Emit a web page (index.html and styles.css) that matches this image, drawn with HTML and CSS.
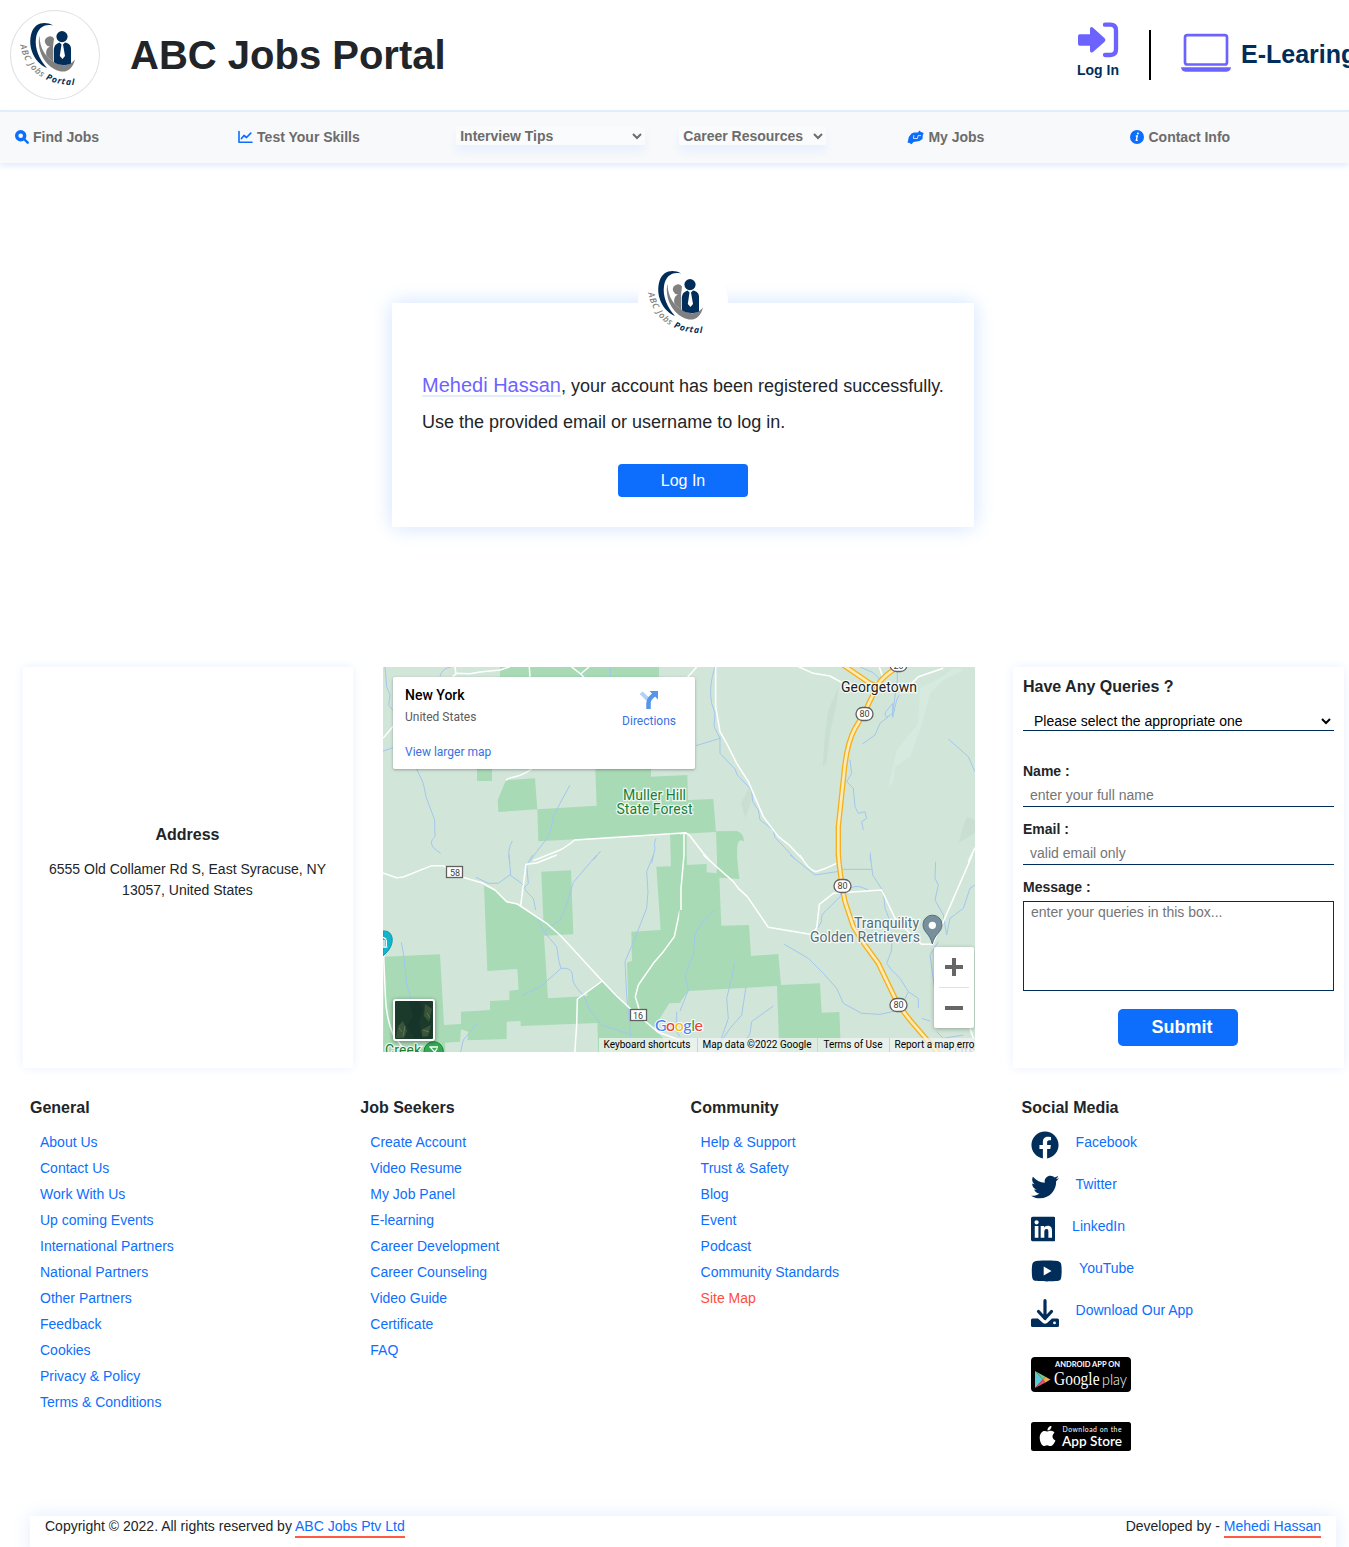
FILE: index.html
```html
<!DOCTYPE html>
<html lang="en">
<head>
<meta charset="utf-8">
<title>ABC Jobs Portal</title>
<link rel="stylesheet" href="styles.css">
</head>
<body>
<svg class="defs" width="0" height="0" aria-hidden="true">
  <symbol id="logo" viewBox="0 0 90 90">
    <path fill="#002d5a" d="M43 15.500C35 11 25 12.500 21.500 23C17 38 25 53 37 58C29 49 24.500 38 26 28C27.500 18 34 13.500 43 15.500Z"/>
    <path fill="#808080" d="M29.500 25.500C26.500 38 33 56 49 61C57 63.500 63 58 65 49.500C60 55.500 54 56.500 47 53.500C36 49 29.500 38 29.500 25.500Z"/>
    <path fill="#808080" d="M44 28.500A5 5 0 1 0 42 36C36 37 35.500 42 36.500 46L43 52V37Z"/>
    <circle cx="52" cy="26.600" r="5.600" fill="#002d5a"/>
    <path fill="#002d5a" d="M49.500 32.500C45 34 43.800 37 43.800 41V52C48 55.500 55 56 61 53.500V39C61 35 58.500 33 55 32.500L53 34.500L55 46L52.500 49L49.800 46L51.500 34.500Z"/>
    <path id="logo-arc" fill="none" d="M10 35Q15.500 60 36 69.500Q49 75.500 66 75"/>
    <text class="logo-text"><textPath href="#logo-arc" textLength="74"><tspan fill="#808080">ABC Jobs </tspan><tspan fill="#002d5a" font-weight="700">Portal</tspan></textPath></text>
  </symbol>
</svg>

<header class="header">
  <svg class="brand-logo"><use href="#logo"/></svg>
  <h1 class="brand-name">ABC Jobs Portal</h1>
  <a class="login">
    <svg width="42" height="36" viewBox="111 66 126 108"><path fill="#6c63ff" d="M119 103H150V88Q150 76 160 84L193 114Q199 120 193 126L160 155Q150 162 150 151V137H119Q114 137 114 131V109Q114 103 119 103Z"/><path d="M195 74H211Q228 74 228 91V148Q228 165 211 165H195" fill="none" stroke="#6c63ff" stroke-width="13" stroke-linecap="round"/></svg>
    <span>Log In</span>
  </a>
  <span class="divider"></span>
  <a class="elearning">
    <svg width="52" height="40" viewBox="420 99 156 120"><rect x="435" y="105.500" width="126" height="88" rx="7" fill="none" stroke="#6c63ff" stroke-width="8"/><path fill="#6c63ff" d="M423 202H573Q571 215 560 215H436Q425 215 423 202Z"/></svg>
    <span>E-Learing</span>
  </a>
</header>

<nav class="nav">
  <a class="nav-link"><svg width="14" height="14" viewBox="0 0 14 14"><circle cx="5.700" cy="5.700" r="4" fill="none" stroke="#0d6efd" stroke-width="3.400"/><path d="M9 9L12.700 12.700" stroke="#0d6efd" stroke-width="2.400" stroke-linecap="round"/></svg>Find Jobs</a>
  <a class="nav-link"><svg width="15" height="14" viewBox="0 0 15 14"><path d="M1 1.500V12.300H14" fill="none" stroke="#0d6efd" stroke-width="1.600" stroke-linecap="round" stroke-linejoin="round"/><path d="M3.500 8.500L6 5.500L8.500 7.500L12.800 3.200" fill="none" stroke="#0d6efd" stroke-width="1.700" stroke-linecap="round" stroke-linejoin="round"/></svg>Test Your Skills</a>
  <select class="nav-select nav-select-wide"><option>Interview Tips</option></select>
  <select class="nav-select"><option>Career Resources</option></select>
  <a class="nav-link"><svg width="17" height="15" viewBox="0 0 17 15"><path fill="#0d6efd" d="M4.500 3.500L7 2.600L11 2.400L12.300 .5L14 2L16.700 3L15.700 5.500L15.500 9L12.500 11L6.500 12L4.500 14.200L2.500 13L.5 12.500L1.200 10L1.800 7Z"/><path d="M6.800 5.200L6.500 8.500H10.500L11 5.600H14" fill="none" stroke="#f8f9fa" stroke-width=".8"/></svg>My Jobs</a>
  <a class="nav-link"><svg width="14" height="14" viewBox="0 0 14 14"><circle cx="7" cy="7" r="7" fill="#0d6efd"/><path d="M5.800 6H7.300L6.300 10.400H7.700" fill="none" stroke="#fff" stroke-width="1.300"/><circle cx="7.900" cy="3.600" r="1" fill="#fff"/></svg>Contact Info</a>
</nav>

<main class="main">
  <section class="notice">
    <svg class="notice-logo"><use href="#logo"/></svg>
    <p class="notice-text"><span class="user">Mehedi Hassan</span>, your account has been registered successfully.</p>
    <p class="notice-text">Use the provided email or username to log in.</p>
    <button class="notice-btn">Log In</button>
  </section>
</main>

<section class="contact">
  <div class="panel address">
    <h3>Address</h3>
    <p>6555 Old Collamer Rd S, East Syracuse, NY 13057, United States</p>
  </div>

  <div class="map">
    <svg width="592" height="385" viewBox="383 667 592 385">
      <rect x="383" y="667" width="592" height="385" fill="#d1e6d9"/>
      <!-- north-west tile -->
      <g transform="translate(380 660) scale(.33333)">
        <g fill="#a8dab5">
          <path d="M360 0H837V80H360ZM291 300H336V363H291ZM378 360L465 355L472 448L355 456L353 420Z"/>
          <path d="M645 300H813V350L922 345L924 420L1000 417L1008 516L475 544L472 448L650 437Z"/>
          <path d="M870 515H920V625H873Z"/>
          <path d="M1008 514L1070 513Q1092 520 1092 545Q1078 535 1074 550Q1070 560 1072 620L1012 622Z"/>
        </g>
        <g class="water">
          <path d="M15 20L20 80L30 105L26 135L38 150M9 273L40 263M110 327L130 370L138 410L164 480L165 530Q145 545 162 565L182 580M180 50Q185 25 215 20M600 50L627 21M691 21V60M570 375L540 430L520 470Q518 500 505 530L470 575L448 605M397 543Q380 570 390 610M662 573L640 600M828 535Q820 550 825 565L815 610"/>
        </g>
        <g class="road"><path d="M218 50L230 40L270 41L300 36L360 30L390 20M225 21L228 42M448 21L450 52M575 21L602 42L627 21M602 42L615 55M9 235L40 198M455 327Q430 345 405 350Q380 355 378 362M460 602L540 570Q560 560 584 540L920 518"/></g>
      </g>
      <!-- north-east tile -->
      <g transform="translate(680 660) scale(.33333)">
        <path fill="#c9dfd1" d="M445 150L475 80L470 130L450 220L440 310L428 320L435 220ZM208 380L222 400L196 475L183 430ZM860 470L885 480V520L835 550L850 500Z"/>
        <path fill="#d7eae0" d="M720 85L780 55L820 25L850 30L790 60L750 100L720 210L690 290L645 320L640 365L625 385L650 270L715 190Z"/>
        <g class="water"><path d="M105 21Q85 80 95 130L105 160L102 200L120 235L48 257M120 230V280L165 327L172 345L215 390L218 425L235 450L240 480L280 510L285 532L348 600M540 21L580 38L610 70M652 30V60L638 160L620 172Q610 165 618 155L638 130V172L650 120L658 105M625 170L600 190L585 225L547 252M510 300L515 340L500 365L520 385L525 440L535 460L555 455L560 475L545 485L550 510M805 237L865 290L885 335M571 578V605"/></g>
        <g class="road"><path d="M107 21V140L120 215L140 250L170 310L205 365L250 470L295 530L325 553L370 600M20 55L50 21M350 18L400 40L450 48L490 70M598 21L608 50M690 75L715 50L790 25M0 521Q20 515 30 528L70 580L90 602M885 563L865 605M12 521V605"/></g>
        <g class="highway"><path d="M475 588V500L492 340Q500 250 525 205L555 155Q580 100 600 65Q620 40 660 18M485 12L570 70L595 80"/></g>
        <g class="highway-fill"><path d="M475 588V500L492 340Q500 250 525 205L555 155Q580 100 600 65Q620 40 660 18M485 12L570 70L595 80"/></g>
      </g>
      <!-- south-west tile -->
      <g transform="translate(380 855) scale(.33333)">
        <path fill="#a8dab5" d="M12 305L180 298L192 510L243 507V470L330 465V438L388 435V407L416 404L412 342L322 348L312 92L350 110L380 142L415 148L490 195L484 50L573 46L580 238L492 242L504 430L622 423V408L667 378L755 465L750 600H655L652 504L422 513V498L380 500V552L262 556L265 530L243 523L240 560L195 563L197 600H9Z"/>
        <path fill="#a8dab5" d="M873 0H902V443L868 445L820 520L850 550V600H750L741 323L756 317L754 230L842 225L829 35L873 34Z"/>
        <g class="water"><path d="M387 0L392 60M288 67L325 85H355L390 60L425 85L440 110L460 130L467 165M458 0L440 30L445 85L432 100M650 0L580 82L555 165L540 195L492 230L530 275L537 320L543 340L510 370L480 395L425 422M475 195L492 230M543 340Q580 335 578 370Q578 390 610 420L630 465L665 510L755 540M820 0L800 50L804 110L800 160L765 250L735 320L740 420L752 545M64 262L72 305L80 390L92 425V445M290 507L250 555L240 600M890 470V530L900 545"/></g>
        <g class="road"><path d="M9 54L50 68L70 66L155 32H190L225 60L305 83L345 105L380 140L412 147L500 205L540 240L667 378L710 423L750 460L835 532L900 555M422 152L438 28L470 24L530 0M667 378L592 432L590 510L584 600M900 165L883 245L850 290L820 325L775 390L766 425L778 465M11 300L16 420Q18 490 40 540L70 580"/></g>
        <path fill="#12b5cb" stroke="#0f98ab" stroke-width="3" d="M9 228C45 225 47 275 9 302Z"/><path d="M9 247L19 253M12 255V273M19 255V273M9 276H22" stroke="#fff" stroke-width="4"/>
        <circle cx="161" cy="589" r="29" fill="#34a853" stroke="#188038" stroke-width="3"/><path d="M148 576H174M152 578L164 591L172 580" fill="none" stroke="#fff" stroke-width="4"/>
      </g>
      <!-- south-east tile -->
      <g transform="translate(680 855) scale(.33333)">
        <path fill="#a8dab5" d="M-2 0H20V30L80 27V52L110 55L112 0H170L178 72L118 68L124 212L207 210L213 303L295 297L303 390L420 385L425 473L478 471L483 591H298L291 393L25 408L-2 444Z"/>
        <g class="water"><path d="M330 0L405 60L470 50L490 43H575M571 0L578 60L610 110L615 160L635 210M103 165L60 210L45 240L40 300L15 360L25 405L0 468M163 322L155 370L140 430L145 490L110 591M198 395L185 480L150 520L120 565M280 453L215 500L210 535L180 591M313 268L385 310L430 355L470 400L490 445L545 475L600 478L660 465L685 410L715 430V460M485 120L440 165Q420 180 425 200L412 220M480 120Q510 90 540 95L565 105M767 20L765 70L775 90L765 135L790 180L800 240L810 190L850 160L870 100L885 90M775 260L750 300L765 410M635 250V285L620 325L635 345L660 370L685 410M725 490L750 498M770 530L790 550L850 540"/></g>
        <g class="road"><path d="M70 0L160 80L175 100L202 125L265 217L390 238L410 220L418 148L460 115L605 105L645 190L695 240L725 268H758L770 240L790 200L877 0M360 0Q385 45 408 50Q440 40 470 25M12 0L3 100V165M870 520L880 550"/></g>
        <g class="highway"><path d="M475 0L478 30L486 93L495 140L520 215L555 270L595 325L655 450L690 495L780 600"/></g>
        <g class="highway-fill"><path d="M475 -3L478 30L486 93L495 140L520 215L555 270L595 325L655 450L690 495L780 600"/></g>
        <path fill="#78909c" stroke="#546e7a" stroke-width="3" d="M757 267C750 235 729 232 729 209A28 28 0 0 1 786 209C786 232 764 235 757 267Z"/><circle cx="757" cy="211" r="11" fill="#fff"/>
      </g>
      <g class="shield">
        <rect x="856" y="707.500" width="17" height="13" rx="6.500"/><text x="864.500" y="717.200">80</text>
        <rect x="834" y="879.500" width="17" height="13" rx="6.500"/><text x="842.500" y="889.200">80</text>
        <rect x="890" y="998.500" width="17" height="13" rx="6.500"/><text x="898.500" y="1008.200">80</text>
        <rect x="890" y="658.500" width="17" height="13" rx="6.500"/><text x="898.500" y="669">20</text>
        <rect x="446.500" y="866.500" width="16" height="11"/><text x="455" y="875.500">58</text>
        <rect x="630.500" y="1009.500" width="16" height="11"/><text x="638" y="1018.700">16</text>
      </g>
      <g class="place">
        <text x="841" y="692" textLength="76" fill="#202124">Georgetown</text>
        <text x="623" y="800" textLength="63" fill="#188038">Muller Hill</text>
        <text x="616.500" y="814" textLength="76" fill="#188038">State Forest</text>
        <text x="854" y="928" textLength="65" fill="#546e7a">Tranquility</text>
        <text x="810" y="942" textLength="110" fill="#546e7a">Golden Retrievers</text>
        <text x="385" y="1055" textLength="36" fill="#188038">Creek</text>
        <text x="954" y="1056" fill="#808080">Otse</text>
      </g>
      <text class="google" x="655" y="1031" textLength="48"><tspan fill="#4285f4">G</tspan><tspan fill="#ea4335">o</tspan><tspan fill="#fbbc04">o</tspan><tspan fill="#4285f4">g</tspan><tspan fill="#34a853">l</tspan><tspan fill="#ea4335">e</tspan></text>
      <rect x="599" y="1038" width="376" height="14" fill="#f5f5f5" fill-opacity=".7"/>
      <path d="M697.500 1038V1052M817.500 1038V1052M889.500 1038V1052" stroke="#c5d8cc"/>
      <g class="legal">
        <text x="603.500" y="1048" textLength="87">Keyboard shortcuts</text>
        <text x="702.500" y="1048" textLength="109">Map data ©2022 Google</text>
        <text x="823.500" y="1048" textLength="59">Terms of Use</text>
        <text x="894.500" y="1048" textLength="80">Report a map erro</text>
      </g>
    </svg>
    <div class="place-card">
      <div class="place-info">
        <strong>New York</strong>
        <span>United States</span>
        <a>View larger map</a>
      </div>
      <div class="directions">
        <svg width="18" height="18" viewBox="0 0 18 18"><path d="M1.300 1.800L8 8.500" stroke="#b3cff5" stroke-width="4"/><path d="M8.500 18V12Q8.500 9 10.500 7L14 3.500" fill="none" stroke="#5696e8" stroke-width="4.500"/><path d="M9.500 0H18V8.500Z" fill="#5696e8"/></svg>
        <a>Directions</a>
      </div>
    </div>
    <div class="satellite"><svg width="38" height="38" viewBox="0 0 38 38"><rect width="38" height="38" fill="#1c3a2c"/><path d="M3 25L8 20L12 30L9 37H1ZM30 3L37 8L34 21L29 15ZM26 29L36 24L33 35L27 36Z" fill="#395438"/><path d="M14 0L18 15L12 25L20 38H28L24 21L28 8L24 0Z" fill="#17342b"/><path d="M4 27L7 31M28 29L34 31M32 12L35 17M10 25L8 35" stroke="#60745b"/></svg></div>
    <div class="zoom"><span class="plus"></span><span class="minus"></span></div>
  </div>

  <form class="panel query">
    <h3>Have Any Queries ?</h3>
    <select><option>Please select the appropriate one</option></select>
    <label>Name :</label>
    <input type="text" placeholder="enter your full name">
    <label>Email :</label>
    <input type="text" placeholder="valid email only">
    <label>Message :</label>
    <textarea placeholder="enter your queries in this box..."></textarea>
    <button type="button">Submit</button>
  </form>
</section>

<footer class="footer">
  <div class="columns">
    <div><h3>General</h3>
      <ul><li>About Us</li><li>Contact Us</li><li>Work With Us</li><li>Up coming Events</li><li>International Partners</li><li>National Partners</li><li>Other Partners</li><li>Feedback</li><li>Cookies</li><li>Privacy &amp; Policy</li><li>Terms &amp; Conditions</li></ul></div>
    <div><h3>Job Seekers</h3>
      <ul><li>Create Account</li><li>Video Resume</li><li>My Job Panel</li><li>E-learning</li><li>Career Development</li><li>Career Counseling</li><li>Video Guide</li><li>Certificate</li><li>FAQ</li></ul></div>
    <div><h3>Community</h3>
      <ul><li>Help &amp; Support</li><li>Trust &amp; Safety</li><li>Blog</li><li>Event</li><li>Podcast</li><li>Community Standards</li><li class="active">Site Map</li></ul></div>
    <div><h3>Social Media</h3>
      <div class="social">
        <a><svg width="28" height="28" viewBox="0 0 512 512"><path d="M504 256C504 119 393 8 256 8S8 119 8 256c0 123.780 90.690 226.380 209.250 245V327.690h-63V256h63v-54.640c0-62.150 37-96.480 93.670-96.480 27.140 0 55.520 4.840 55.520 4.840v61h-31.280c-30.800 0-40.410 19.120-40.410 38.730V256h68.780l-11 71.690h-57.780V501C413.310 482.380 504 379.780 504 256z"/></svg><span>Facebook</span></a>
        <a><svg width="28" height="28" viewBox="0 0 512 512"><path d="M459.370 151.716c.325 4.548.325 9.097.325 13.645 0 138.720-105.583 298.558-298.558 298.558-59.452 0-114.680-17.219-161.137-47.106 8.447.974 16.568 1.299 25.340 1.299 49.055 0 94.213-16.568 130.274-44.832-46.132-.975-84.792-31.188-98.112-72.772 6.498.974 12.995 1.624 19.818 1.624 9.421 0 18.843-1.300 27.614-3.573-48.081-9.747-84.143-51.980-84.143-102.985v-1.299c13.969 7.797 30.214 12.670 47.431 13.319-28.264-18.843-46.781-51.005-46.781-87.391 0-19.492 5.197-37.360 14.294-52.954 51.655 63.675 129.300 105.258 216.365 109.807-1.624-7.797-2.599-15.918-2.599-24.040 0-57.828 46.782-104.934 104.934-104.934 30.213 0 57.502 12.670 76.670 33.137 23.715-4.548 46.456-13.320 66.599-25.340-7.798 24.366-24.366 44.833-46.132 57.827 21.117-2.273 41.584-8.122 60.426-16.243-14.292 20.791-32.161 39.308-52.628 54.253z"/></svg><span>Twitter</span></a>
        <a><svg width="24.500" height="28" viewBox="0 0 448 512"><path d="M416 32H31.900C14.300 32 0 46.500 0 64.300v383.400C0 465.500 14.300 480 31.900 480H416c17.600 0 32-14.500 32-32.300V64.300c0-17.800-14.400-32.300-32-32.300zM135.400 416H69V202.200h66.500V416zm-33.200-243c-21.300 0-38.500-17.300-38.500-38.500S80.900 96 102.200 96c21.200 0 38.500 17.300 38.500 38.500 0 21.300-17.200 38.500-38.500 38.500zm282.100 243h-66.400V312c0-24.800-.5-56.700-34.500-56.700-34.600 0-39.900 27-39.900 54.900V416h-66.400V202.200h63.700v29.200h.9c8.900-16.800 30.600-34.500 62.900-34.500 67.200 0 79.700 44.300 79.700 101.900V416z"/></svg><span>LinkedIn</span></a>
        <a><svg width="31.500" height="28" viewBox="0 0 576 512"><path d="M549.655 124.083c-6.281-23.650-24.787-42.276-48.284-48.597C458.781 64 288 64 288 64S117.220 64 74.629 75.486c-23.497 6.322-42.003 24.947-48.284 48.597-11.412 42.867-11.412 132.305-11.412 132.305s0 89.438 11.412 132.305c6.281 23.650 24.787 41.500 48.284 47.821C117.220 448 288 448 288 448s170.780 0 213.371-11.486c23.497-6.321 42.003-24.171 48.284-47.821 11.412-42.867 11.412-132.305 11.412-132.305s0-89.438-11.412-132.305zm-317.510 213.508V175.185l142.739 81.205-142.739 81.201z"/></svg><span>YouTube</span></a>
        <a><svg width="28" height="28" viewBox="0 0 28 28"><path d="M14 1.700V19M7.500 12.500L14 19.500L20.500 12.500" fill="none" stroke="#002d5a" stroke-width="3.200" stroke-linecap="round" stroke-linejoin="round"/><path fill-rule="evenodd" d="M1.500 19.500H7L12 24Q14 25.500 16 24L21 19.500H26.500Q28 19.500 28 21V26.500Q28 28 26.500 28H1.500Q0 28 0 26.500V21Q0 19.500 1.500 19.500ZM23.500 22.500A1.400 1.400 0 1 0 23.500 25.300A1.400 1.400 0 1 0 23.500 22.500Z"/></svg><span>Download Our App</span></a>
      </div>
      <svg class="badge badge-play" width="100" height="35" viewBox="0 0 100 35"><rect width="100" height="35" rx="4"/><path fill="#5bc8d8" d="M4 14V31L12 22.500Z"/><path fill="#6ecb8c" d="M4 14L14.500 19.700L12 22.500Z"/><path fill="#e2506a" d="M4 31L14.500 25.500L12 22.500Z"/><path fill="#f0a850" d="M14.500 19.700L19.500 22.500L14.500 25.500L12 22.500Z"/><g fill="#fff"><text x="24" y="10" textLength="65" lengthAdjust="spacingAndGlyphs" font-size="6.800" font-weight="700">ANDROID APP ON</text><text class="serif" x="23" y="28" textLength="45.500" lengthAdjust="spacingAndGlyphs" font-size="18">Google</text><text class="light" x="71" y="28" textLength="25" lengthAdjust="spacingAndGlyphs" font-size="15">play</text></g></svg>
      <svg class="badge badge-store" width="100" height="29" viewBox="0 0 100 29"><rect width="100" height="29" rx="2.500"/><path fill="#fff" d="M16.500 9.500C18 9.500 19.500 8 22.500 9.500L23.500 10.800C20.500 13 21 17 24.500 18.500C23 22 21.500 24 19.500 24C18 24 17.500 23.200 16 23.200S14 24 12.800 24C10 24 6.500 14.500 10.500 10.500C13 8 15 9.500 16.500 9.500ZM16.500 8.500C16.300 6 18.500 4 20.500 4C20.600 6.500 18.700 8.500 16.500 8.500Z"/><g fill="#fff"><text x="31.500" y="9.800" textLength="59" font-size="6.800">Download on the</text><text x="31" y="24" textLength="60" lengthAdjust="spacingAndGlyphs" font-size="14" font-weight="600">App Store</text></g></svg>
    </div>
  </div>
  <div class="copyright">
    <p>Copyright © 2022. All rights reserved by <a>ABC Jobs Ptv Ltd</a></p>
    <p>Developed by - <a>Mehedi Hassan</a></p>
  </div>
</footer>
</body>
</html>
```
FILE: styles.css
```css
* { box-sizing: border-box; margin: 0; padding: 0; }
body { font-family: "Liberation Sans", Arial, sans-serif; font-size: 14px; line-height: 21px; color: #212529; background: #fff; height: 1547px; overflow: hidden; }
svg { display: block; flex: none; }
.defs { position: absolute; }
button, input, select, textarea { font-family: inherit; }
h3 { font-size: 16px; line-height: 20px; }

.header { display: flex; align-items: flex-start; height: 110px; padding: 10px 0 0 10px; overflow: hidden; }
.brand-logo { width: 90px; height: 90px; border-radius: 50%; box-shadow: inset 0 0 0 1px #dee2e6; }
.logo-text { font: italic 600 8.700px "Open Sans", "Noto Sans", sans-serif; }
.brand-name { margin: 21px auto 0 30px; font-size: 40px; line-height: 48px; }
.login { display: flex; flex-direction: column; margin-top: 12px; color: #002d5a; font-weight: 700; }
.login span { line-height: 18px; margin-top: 3px; }
.divider { width: 2px; height: 50px; margin: 20px 29px 0 30px; background: #000; }
.elearning { display: flex; width: 169px; flex: none; gap: 9px; margin-top: 23px; color: #002d5a; font-size: 25px; font-weight: 700; white-space: nowrap; }
.elearning span { line-height: 42px; }

.nav { display: grid; grid-template-columns: repeat(6, 223.100px); height: 53px; padding-left: 15px; border-top: 2px solid #e1ecff; background: #f8f9fa; box-shadow: 0 3px 6px #e1ecff; color: #6c6c6c; font-weight: 700; overflow: visible; }
.nav-link { display: flex; align-items: center; gap: 4px; height: 50px; white-space: nowrap; }
.nav-select { width: 147px; height: 18px; margin: 15px 0 0 -5px; border: 0; background: #fafbfc; box-shadow: 0 7px 10px #e8f0ff; color: #6c6c6c; font-size: 14px; font-weight: 700; }
.nav-select-wide { width: 189px; }

.main { display: flex; justify-content: center; height: 504px; padding: 140px 0 0 17px; }
.notice { display: flex; flex-direction: column; width: 582px; height: 224px; padding: 0 30px; background: #fff; box-shadow: 0 0 20px #cfe2ff; }
.notice-logo { width: 90px; height: 90px; margin: -45px auto 20px; border-radius: 50%; background: #fff; }
.notice-text { height: 36px; font-size: 18px; line-height: 36px; white-space: nowrap; }
.user { display: inline-block; height: 24px; line-height: 24px; border-bottom: 2px solid #e1ecff; color: #6c63ff; font-size: 20px; }
.notice-btn { align-self: center; width: 130px; height: 33px; margin-top: 24px; border: 0; border-radius: 4px; background: #0d6efd; color: #fff; font-size: 16px; }

.contact { display: grid; grid-template-columns: 330px 592px 331px; column-gap: 30px; align-items: start; padding-left: 23px; }
.panel { height: 401px; background: #fff; box-shadow: 0 0 10px #e8f0ff; }
.address { padding: 158px 21px 0 20px; text-align: center; }
.address p { margin-top: 14px; }
.map { position: relative; width: 592px; height: 385px; overflow: hidden; font-family: Roboto, sans-serif; }
.water { fill: none; stroke: #a3c6ee; stroke-width: 3; }
.road { fill: none; stroke: #fff; stroke-width: 4.500; stroke-linejoin: round; }
.highway { fill: none; stroke: #f5b021; stroke-width: 16; }
.highway-fill { fill: none; stroke: #ffebb3; stroke-width: 8; }
.shield rect { fill: #fff; stroke: #606060; stroke-width: 1.300; }
.shield text { fill: #404040; font-size: 9px; text-anchor: middle; }
.place text { font-size: 14px; stroke: #fff; stroke-opacity: .8; stroke-width: 2.500px; paint-order: stroke; }
.google { font: 500 16px Lato, sans-serif; stroke: #fff; stroke-width: 2px; paint-order: stroke; }
.legal { font-size: 10px; fill: #000; }
.place-card { position: absolute; top: 10px; left: 10px; display: flex; justify-content: space-between; width: 302px; height: 92px; padding: 8px 19px 0 12px; border-radius: 2px; background: #fff; box-shadow: 0 1px 3px rgba(0, 0, 0, .3); font-size: 12px; }
.place-info { display: flex; flex-direction: column; }
.place-info strong { color: #000; font-size: 14px; font-weight: 500; line-height: 20px; }
.place-info span { margin-top: 2px; color: #5b5b5b; line-height: 20px; }
.place-info a { margin-top: 15px; line-height: 20px; }
.place-card a { color: #3a70e2; }
.directions { display: flex; flex-direction: column; align-items: center; padding-top: 6px; }
.directions a { margin-top: 2px; line-height: 20px; }
.satellite { position: absolute; left: 10px; top: 332px; width: 42px; height: 42px; border: 2px solid #fff; border-radius: 3px; box-shadow: 0 1px 4px rgba(0, 0, 0, .4); overflow: hidden; }
.zoom { position: absolute; left: 551px; top: 280px; width: 40px; height: 81px; border-radius: 2px; background: #fff; box-shadow: 0 1px 4px rgba(0, 0, 0, .3); }
.plus, .minus { display: block; height: 40px; margin: 0 5px; background: linear-gradient(#666, #666) center / 18px 4px no-repeat; }
.plus { height: 41px; border-bottom: 1px solid #e0e0e0; background: linear-gradient(#666, #666) center / 18px 4px no-repeat, linear-gradient(#666, #666) center / 4px 18px no-repeat; }

.query { display: flex; flex-direction: column; width: 331px; margin-left: 8px; padding: 10px 10px 0; }
.query select { height: 19px; margin: 15px 0 30px; padding: 0 1px 0 7px; border: 0; border-bottom: 1px solid #002d5a; background: #fff; color: #000; font-size: 14px; }
.query label { height: 21px; font-weight: 700; }
.query input { height: 23px; margin: 2px 0 12px; padding: 0 7px; border: 0; border-bottom: 1px solid #002d5a; font-size: 14px; }
.query textarea { height: 90px; margin-top: 3px; padding: 2px 7px; border: 1px solid #002d5a; font-size: 14px; resize: none; }
.query ::placeholder { color: #757575; }
.query button { width: 120px; height: 37px; margin: 18px 0 0 95px; padding-left: 8px; border: 0; border-radius: 5px; background: #0d6efd; color: #fff; font-size: 18px; font-weight: 700; }

.footer { padding: 30px 13px 0 30px; }
.columns { display: grid; grid-template-columns: 330.300px 330.300px 331px 300px; height: 418px; }
.columns ul { margin: 11px 0 0 10px; list-style: none; color: #0d6efd; line-height: 26px; }
.columns .active { color: #ff4d3d; }
.social { padding: 13px 0 0 9px; color: #0d6efd; }
.social a { display: flex; gap: 17px; height: 42px; }
.social span { padding-top: 1px; }
.social svg { fill: #002d5a; }
.badge { margin-left: 9px; font-family: Lato, sans-serif; }
.badge-play { margin-top: 16px; }
.badge-store { margin-top: 30px; }
.serif { font-family: "Liberation Serif", serif; }
.light { font-family: Lato, sans-serif; font-weight: 300; }
.copyright { display: flex; justify-content: space-between; height: 40px; padding: 0 15px; background: #fff; box-shadow: 0 0 20px #e1ecff; }
.copyright a { padding-bottom: 2px; border-bottom: 2px solid #ff5a45; color: #0d6efd; }
```
